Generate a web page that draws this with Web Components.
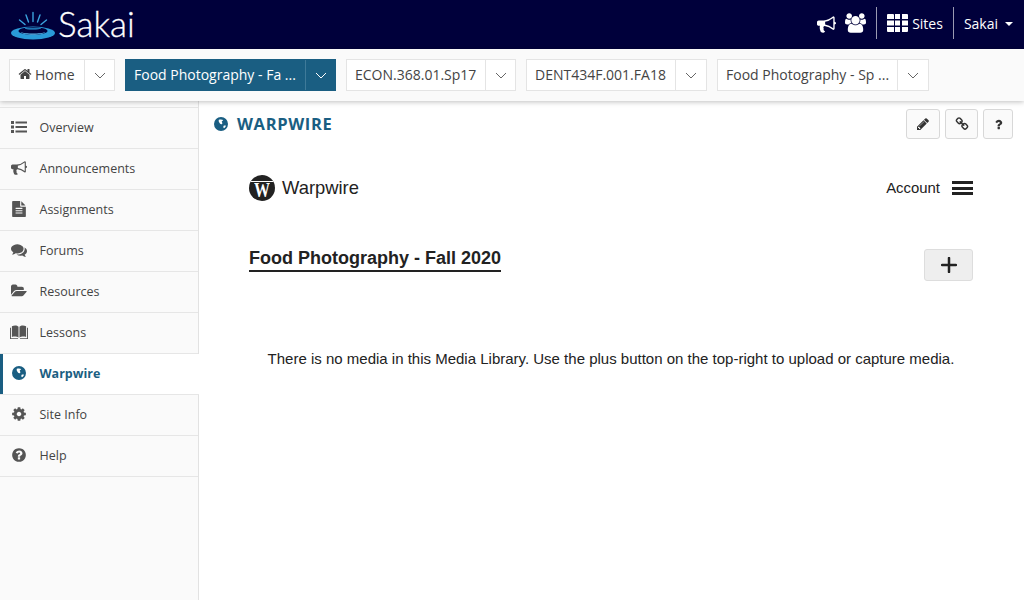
<!DOCTYPE html>
<html lang="en">
<head>
<meta charset="utf-8">
<title>Warpwire : Food Photography - Fall 2020 : Sakai</title>
<style>
  html, body { margin: 0; height: 100%; overflow: hidden; background: #fff; }
  body { font-family: "Open Sans", "Liberation Sans", sans-serif; color: #333; }
  sakai-shell { height: 600px; }
</style>
</head>
<body>

<sakai-shell>
  <sakai-header slot="header"></sakai-header>
  <site-tabs slot="tabs">
    <site-tab icon="home" style="--label-w:75px;--caret-w:29px">Home</site-tab>
    <site-tab active style="--label-w:180px;--caret-w:29px">Food Photography - Fa ...</site-tab>
    <site-tab style="--label-w:139px;--caret-w:29px">ECON.368.01.Sp17</site-tab>
    <site-tab style="--label-w:149px;--caret-w:30px">DENT434F.001.FA18</site-tab>
    <site-tab style="--label-w:180px;--caret-w:30px">Food Photography - Sp ...</site-tab>
  </site-tabs>
  <tool-menu slot="menu">
    <tool-item icon="list">Overview</tool-item>
    <tool-item icon="bullhorn">Announcements</tool-item>
    <tool-item icon="file">Assignments</tool-item>
    <tool-item icon="comments">Forums</tool-item>
    <tool-item icon="folder">Resources</tool-item>
    <tool-item icon="book" size="18">Lessons</tool-item>
    <tool-item icon="globe" size="14" active>Warpwire</tool-item>
    <tool-item icon="gear">Site Info</tool-item>
    <tool-item icon="help">Help</tool-item>
  </tool-menu>
  <tool-title slot="title">WARPWIRE</tool-title>
  <warpwire-panel slot="content" course="Food Photography - Fall 2020">
    There is no media in this Media Library. Use the plus button on the top-right to upload or capture media.
  </warpwire-panel>
</sakai-shell>

<script>
// font awesome 4 shapes, redrawn where noted
const ICONS = {
  home: ['0 0 1792 1792', 'M1472 992v480q0 26-19 45t-45 19h-384v-384h-256v384h-384q-26 0-45-19t-19-45v-480q0-1 .5-3t.5-3l575-474 575 474q1 2 1 6zm223-69l-62 74q-8 9-21 11h-3q-13 0-21-7l-692-577-692 577q-12 8-24 7-13-2-21-11l-62-74q-8-10-7-23.5t11-21.5l719-599q32-26 76-26t76 26l244 204v-195q0-14 9-23t23-9h192q14 0 23 9t9 23v408l219 182q10 8 11 21.5t-7 23.5z'],
  bullhorn: ['0 0 1792 1792', 'M1664 640q53 0 90.5 37.5t37.5 90.5-37.5 90.5-90.5 37.5v384q0 52-38 90t-90 38q-417-347-812-380-58 19-91 66t-31 100.5 40 92.5q-20 33-23 65.5t6 58 33.5 55 48 50 61.5 50.5q-29 58-111.5 83t-168.5 11.5-132-55.5q-7-23-29.5-87.5t-32-94.5-23-89-15-101 3.5-98.5 22-110.5h-122q-66 0-113-47t-47-113v-192q0-66 47-113t113-47h480q435 0 896-384 52 0 90 38t38 90v384zm-128 604v-954q-394 302-768 343v270q377 42 768 341z'],
  users: ['0 0 1920 1792', 'M593 896q-162 5-265 128h-134q-82 0-138-40.5t-56-118.5q0-353 124-353 6 0 43.5 21t97.5 42.5 119 21.5q67 0 133-23-5 37-5 66 0 139 81 256zm1071 637q0 120-73 189.5t-194 69.5h-874q-121 0-194-69.5t-73-189.5q0-53 3.5-103.5t14-109 26.5-108.5 43-97.5 62-81 85.5-53.5 111.5-20q10 0 43 21.5t73 48 107 48 135 21.5 135-21.5 107-48 73-48 43-21.5q61 0 111.5 20t85.5 53.5 62 81 43 97.5 26.5 108.5 14 109 3.5 103.5zm-1024-1277q0 106-75 181t-181 75-181-75-75-181 75-181 181-75 181 75 75 181zm704 384q0 159-112.5 271.5t-271.5 112.5-271.5-112.5-112.5-271.5 112.5-271.5 271.5-112.5 271.5 112.5 112.5 271.5zm576 225q0 78-56 118.5t-138 40.5h-134q-103-123-265-128 81-117 81-256 0-29-5-66 66 23 133 23 59 0 119-21.5t97.5-42.5 43.5-21q124 0 124 353zm-128-609q0 106-75 181t-181 75-181-75-75-181 75-181 181-75 181 75 75 181z'],
  th: ['0 0 21 18', 'M1 0h5a1 1 0 0 1 1 1v4H0V1a1 1 0 0 1 1-1zM8 0h5v5H8zM15 0h5a1 1 0 0 1 1 1v4h-6zM0 6.5h7v5H0zM8 6.5h5v5H8zM15 6.500h6v5h-6zM0 13h7v5H1a1 1 0 0 1-1-1zM8 13h5v5H8zM15 13h6v4a1 1 0 0 1-1 1h-5z'],
  pencil: ['0 0 1792 1792', 'M491 1536l91-91-235-235-91 91v107h128v128h107zm523-928q0-22-22-22-10 0-17 7l-542 542q-7 7-7 17 0 22 22 22 10 0 17-7l542-542q7-7 7-17zm-54-192l416 416-832 832h-416v-416zm683 96q0 53-37 90l-166 166-416-416 166-165q36-38 90-38 53 0 91 38l235 234q37 39 37 91z'],
  link: ['0 0 1792 1792', 'M1520 1216q0-40-28-68l-208-208q-28-28-68-28-42 0-72 32 3 3 19 18.500t21.500 21.500 15 19 13 25.500 3.500 27.500q0 40-28 68t-68 28q-15 0-27.500-3.500t-25.500-13-19-15-21.500-21.500-18.500-19q-33 31-33 73 0 40 28 68l206 207q27 27 68 27 40 0 68-26l147-146q28-28 28-67zm-703-705q0-40-28-68l-206-207q-28-28-68-28-39 0-68 27l-147 146q-28 28-28 67 0 40 28 68l208 208q27 27 68 27 42 0 72-31-3-3-19-18.500t-21.500-21.500-15-19-13-25.500-3.500-27.500q0-40 28-68t68-28q15 0 27.500 3.500t25.500 13 19 15 21.500 21.500 18.500 19q33-31 33-73zm895 705q0 120-85 203l-147 146q-83 83-203 83-121 0-204-85l-206-207q-83-83-83-203 0-123 88-209l-88-88q-86 88-208 88-120 0-204-84l-208-208q-84-84-84-204t85-203l147-146q83-83 203-83 121 0 204 85l206 207q83 83 83 203 0 123-88 209l88 88q86-88 208-88 120 0 204 84l208 208q84 84 84 204z'],
  question: ['0 0 1792 1792', 'M1088 1256v240q0 16-12 28t-28 12h-240q-16 0-28-12t-12-28v-240q0-16 12-28t28-12h240q16 0 28 12t12 28zm316-600q0 54-15.500 101t-35 76.500-55 59.500-57.500 43.500-61 35.500q-41 23-68.500 65t-27.500 67q0 17-12 32.500t-28 15.500h-240q-15 0-25.500-18.500t-10.500-37.500v-45q0-83 65-156.500t143-108.500q59-27 84-56t25-76q0-42-46.500-74t-107.500-32q-65 0-108 29-35 25-107 115-13 16-31 16-12 0-25-8l-164-125q-13-10-15.500-25t5.500-28q160-266 464-266 80 0 161 31t146 83 106 127.500 41 158.500z'],
  list: ['0 0 16 13', 'M0 .5h3v3H0zM0 5h3v3H0zM0 9.500h3v3H0zM4.500 1h11.500v2H4.500zM4.500 5.500h11.500v2H4.500zM4.500 10h11.500v2H4.500z'],
  file: ['0 0 1792 1792', 'M1596 476q14 14 28 36h-472v-472q22 14 36 28zm-476 164h544v1056q0 40-28 68t-68 28h-1344q-40 0-68-28t-28-68v-1600q0-40 28-68t68-28h800v544q0 40 28 68t68 28zm160 736v-64q0-14-9-23t-23-9h-704q-14 0-23 9t-9 23v64q0 14 9 23t23 9h704q14 0 23-9t9-23zm0-256v-64q0-14-9-23t-23-9h-704q-14 0-23 9t-9 23v64q0 14 9 23t23 9h704q14 0 23-9t9-23zm0-256v-64q0-14-9-23t-23-9h-704q-14 0-23 9t-9 23v64q0 14 9 23t23 9h704q14 0 23-9t9-23z'],
  comments: ['0 0 1792 1792', 'M1408 768q0 139-94 257t-256.500 186.500-353.500 68.500q-86 0-176-16-124 88-278 128-36 9-86 16h-3q-11 0-20.500-8t-11.500-21q-1-3-1-6.500t.5-6.500 2-6l2.500-5 3.500-5.500 4-5 4.500-5 4-4.500q5-6 23-25t26-29.500 22.500-29 25-38.500 20.500-44q-124-72-195-177t-71-224q0-139 94-257t256.500-186.500 353.500-68.500 353.500 68.500 256.500 186.500 94 257zm384 256q0 120-71 224.500t-195 176.500q10 24 20.500 44t25 38.500 22.500 29 26 29.500 23 25q1 1 4 4.500t4.500 5 4 5 3.500 5.500l2.500 5 2 6 .5 6.500-1 6.500q-3 14-13 22t-22 7q-50-7-86-16-154-40-278-128-90 16-176 16-271 0-472-132 58 4 88 4 161 0 309-45t264-129q125-92 192-212t67-254q0-77-23-152 129 71 204 178t75 230z'],
  folder: ['0 0 1920 1792', 'M1879 952q0 31-31 66l-336 396q-43 51-120.500 86.500t-143.500 35.500h-1088q-34 0-60.500-13t-26.500-43q0-31 31-66l336-396q43-51 120.500-86.500t143.500-35.500h1088q34 0 60.500 13t26.500 43zm-343-344v160h-832q-94 0-197 47.500t-164 119.500l-337 396-5 6q0-4-.5-12.500t-.5-12.500v-960q0-92 66-158t158-66h320q92 0 158 66t66 158v32h544q92 0 158 66t66 158z'],
  // open book, hand drawn
  book: ['0 0 19 15', 'M2 1.500C4.500.3 7.500.5 9 2v11.500C7.500 12.300 4.500 12 2 12.800zM10 2c1.500-1.500 4.500-1.700 7-.5v11.300c-2.500-.8-5.500-.5-7 .7zM1 3v11h7.500v.8H0V3zM18 3v11h-7.500v.8H19V3z'],
  gear: ['0 0 1792 1792', 'M1152 896q0-106-75-181t-181-75-181 75-75 181 75 181 181 75 181-75 75-181zm512-109v222q0 12-8 23t-20 13l-185 28q-19 54-39 91 35 50 107 138 10 12 10 25t-9 23q-27 37-99 108t-94 71q-12 0-26-9l-138-108q-44 23-91 38-16 136-29 186-7 28-36 28h-222q-14 0-24.500-8.500t-11.500-21.500l-28-184q-49-16-90-37l-141 107q-10 9-25 9-14 0-25-11-126-114-165-168-7-10-7-23 0-12 8-23 15-21 51-66.500t54-70.500q-27-50-41-99l-183-27q-13-2-21-12.500t-8-23.500v-222q0-12 8-23t19-13l186-28q14-46 39-92-40-57-107-138-10-12-10-24 0-10 9-23 26-36 98.500-107.500t94.500-71.500q13 0 26 10l138 107q44-23 91-38 16-136 29-186 7-28 36-28h222q14 0 24.500 8.500t11.500 21.500l28 184q49 16 90 37l142-107q9-9 24-9 13 0 25 10 129 119 165 170 7 8 7 22 0 12-8 23-15 21-51 66.500t-54 70.500q26 50 41 98l183 28q13 2 21 12.500t8 23.500z'],
  help: ['0 0 1792 1792', 'M1024 1376v-192q0-14-9-23t-23-9h-192q-14 0-23 9t-9 23v192q0 14 9 23t23 9h192q14 0 23-9t9-23zm256-672q0-88-55.500-163t-138.500-116-170-41q-243 0-371 213-15 24 8 42l132 100q7 6 19 6 16 0 25-12 53-68 86-92 34-24 86-24 48 0 85.500 26t37.500 59q0 38-20 61t-68 45q-63 28-115.500 86.500t-52.500 125.500v36q0 14 9 23t23 9h192q14 0 23-9t9-23q0-19 21.500-49.500t54.500-49.500q32-18 49-28.500t46-35 44.500-48 28-60.500 12.500-81zm384 192q0 209-103 385.500t-279.500 279.500-385.500 103-385.500-103-279.500-279.500-103-385.500 103-385.500 279.500-279.500 385.500-103 385.500 103 279.500 279.500 103 385.500z'],
  // globe with the land cut out, hand drawn
  globe: ['0 0 16 16', 'M8 0a8 8 0 1 1 0 16A8 8 0 0 1 8 0zM5.500 3.200c1.500-.7 3.800-.6 5 .2-.3 1.100-1.400 1.100-1.700 2.100.5 1 1.200 1.600.4 2.500-1.100.5-2 0-2.600-.9C6 6.100 4.900 5.300 5.500 3.200zM11 10c1.100-.4 2.200-.6 2.600 0-.2 1.100-1.100 2.200-2.200 2.800-.9-.6-.9-1.900-.4-2.800z', 'evenodd']
};

class FaIcon extends HTMLElement {
  connectedCallback() {
    const [box, d, rule] = ICONS[this.getAttribute('name')];
    this.attachShadow({ mode: 'open' }).innerHTML = `
      <style>
        :host { display: inline-flex; flex: none; }
        svg { display: block; width: 100%; height: 100%; fill: currentColor; }
      </style>
      <svg viewBox="${box}"><path d="${d}" fill-rule="${rule || 'nonzero'}"/></svg>`;
  }
}
customElements.define('fa-icon', FaIcon);

class SakaiShell extends HTMLElement {
  connectedCallback() {
    this.attachShadow({ mode: 'open' }).innerHTML = `
      <style>
        :host { display: grid; grid-template-columns: 199px 1fr; grid-template-rows: 49px 52px 1fr; }
        .head, .tabs { grid-column: 1 / -1; }
        .tabs { position: relative; z-index: 2; box-shadow: 0 1px 5px rgba(0,0,0,.25); }
        .side { background: #fafafa; border-right: 1px solid #e2e2e2; padding-top: 6px; box-sizing: border-box; }
        .main { display: flex; flex-direction: column; min-width: 0; }
      </style>
      <div class="head"><slot name="header"></slot></div>
      <div class="tabs"><slot name="tabs"></slot></div>
      <div class="side"><slot name="menu"></slot></div>
      <div class="main"><slot name="title"></slot><slot name="content"></slot></div>`;
  }
}
customElements.define('sakai-shell', SakaiShell);

class SakaiHeader extends HTMLElement {
  connectedCallback() {
    this.attachShadow({ mode: 'open' }).innerHTML = `
      <style>
        :host { display: flex; height: 49px; align-items: center; background: #00003b; color: #fff; font-size: 14px; }
        .logo { display: flex; align-items: center; margin-left: 10px; }
        .logo svg { width: 47px; height: 30px; display: block; margin-top: 1px; }
        .word { font: 300 35px/45px Lato, "Open Sans", sans-serif; margin: -3px 0 0 1px; -webkit-text-stroke: .3px #fff; }
        .right { margin-left: auto; display: flex; align-items: center; height: 36px; margin-top: -3px; }
        .sep { width: 1px; height: 32px; background: #9a9ab2; }
        .sites { display: flex; align-items: center; gap: 4px; padding: 0 10px; }
        .user { display: flex; align-items: center; padding: 0 11px 0 10px; gap: 7px; }
        .caret { width: 0; height: 0; border: 4.500px solid transparent; border-top-color: #fff; border-bottom: 0; margin-top: 2px; }
      </style>
      <div class="logo">
        <svg viewBox="0 0 47 30" aria-hidden="true">
          <ellipse cx="23" cy="23" rx="22" ry="6.500" fill="#2a9ad8"/>
          <ellipse cx="23" cy="21" rx="14.500" ry="3.800" fill="#00003b"/>
          <path d="M11 22c3 2 21 2 24 0-2 3.600-22 3.600-24 0z" fill="#5cb7ea"/>
          <path d="M15.500 18c0 1.300 15 1.300 15 0" fill="none" stroke="#2a9ad8" stroke-width="1.200"/>
          <path d="M23 11.500V2.500M18.500 12L16 5M27.500 12L30 5M15 14.500L9.500 10M31 14.500L36.500 10" fill="none" stroke="#3aa3de" stroke-width="1.400" stroke-linecap="round"/>
        </svg>
        <span class="word">Sakai</span>
      </div>
      <div class="right">
        <fa-icon name="bullhorn" style="width:19px;height:19px;margin:2px 9px 0 0"></fa-icon>
        <fa-icon name="users" style="width:21px;height:20px;margin-right:10px"></fa-icon>
        <div class="sep"></div>
        <div class="sites"><fa-icon name="th" style="width:21px;height:18px"></fa-icon><span>Sites</span></div>
        <div class="sep"></div>
        <div class="user"><span>Sakai</span><i class="caret"></i></div>
      </div>`;
  }
}
customElements.define('sakai-header', SakaiHeader);

class SiteTabs extends HTMLElement {
  connectedCallback() {
    this.attachShadow({ mode: 'open' }).innerHTML = `
      <style>
        :host { display: flex; height: 52px; box-sizing: border-box; padding: 10px 9px; gap: 10px; background: #fafafa; }
      </style>
      <slot></slot>`;
  }
}
customElements.define('site-tabs', SiteTabs);

class SiteTab extends HTMLElement {
  connectedCallback() {
    const icon = this.getAttribute('icon');
    this.attachShadow({ mode: 'open' }).innerHTML = `
      <style>
        :host { display: flex; height: 32px; box-sizing: border-box; border: 1px solid #e4e4e4; background: #fff; color: #444; font-size: 14px; }
        :host([active]) { background: #1a5e82; border-color: #1a5e82; color: #fff; }
        .label { width: var(--label-w); box-sizing: border-box; padding: 0 0 2px 8px; display: flex; align-items: center; gap: 3px; white-space: nowrap; overflow: hidden; border-right: 1px solid #e4e4e4; }
        :host([active]) .label { border-right-color: #3f7a99; }
        .caret { width: var(--caret-w); display: flex; align-items: center; justify-content: center; color: #666; }
        :host([active]) .caret { color: #fff; }
        svg { width: 12px; height: 7px; fill: none; stroke: currentColor; stroke-width: 1; }
      </style>
      <div class="label">${icon ? `<fa-icon name="${icon}" style="width:14px;height:14px"></fa-icon>` : ''}<slot></slot></div>
      <div class="caret"><svg viewBox="0 0 12 7"><path d="M1 1l5 5 5-5"/></svg></div>`;
  }
}
customElements.define('site-tab', SiteTab);

class ToolMenu extends HTMLElement {
  connectedCallback() {
    this.attachShadow({ mode: 'open' }).innerHTML = `
      <style>:host { display: block; border-top: 1px solid #e6e6e6; }</style>
      <slot></slot>`;
  }
}
customElements.define('tool-menu', ToolMenu);

class ToolItem extends HTMLElement {
  connectedCallback() {
    const size = this.getAttribute('size') || 16;
    this.attachShadow({ mode: 'open' }).innerHTML = `
      <style>
        :host { display: flex; align-items: center; height: 41px; box-sizing: border-box; border-bottom: 1px solid #e6e6e6; padding: 0 0 2px 11px; font-size: 12.500px; color: #444; }
        :host([active]) { background: #fff; color: #1a5e82; font-weight: 700; box-shadow: inset 3px 0 0 #1a5e82; margin-right: -1px; }
        .ic { width: 16px; display: flex; justify-content: center; margin-right: 12.500px; color: #555; }
        :host([active]) .ic { color: #1a5e82; }
      </style>
      <span class="ic"><fa-icon name="${this.getAttribute('icon')}" style="width:${size}px;height:${size}px"></fa-icon></span>
      <slot></slot>`;
  }
}
customElements.define('tool-item', ToolItem);

class ToolTitle extends HTMLElement {
  connectedCallback() {
    this.attachShadow({ mode: 'open' }).innerHTML = `
      <style>
        :host { display: flex; align-items: flex-start; padding: 8px 11px 0 15px; height: 40px; box-sizing: border-box; color: #1a5e82; }
        h1 { margin: 0; font-size: 16.500px; line-height: 30px; font-weight: 700; letter-spacing: .65px; display: flex; align-items: center; gap: 9px; height: 30px; }
        .btns { margin-left: auto; display: flex; gap: 5px; color: #333; }
        .btn { height: 30px; box-sizing: border-box; border: 1px solid #d8d8d8; border-radius: 3px; background: #fafafa; display: flex; align-items: center; justify-content: center; }
      </style>
      <h1><fa-icon name="globe" style="width:14px;height:14px"></fa-icon><slot></slot></h1>
      <div class="btns">
        <div class="btn" style="width:34px"><fa-icon name="pencil" style="width:14px;height:14px"></fa-icon></div>
        <div class="btn" style="width:33px"><fa-icon name="link" style="width:14px;height:14px"></fa-icon></div>
        <div class="btn" style="width:30px"><fa-icon name="question" style="width:13px;height:13px"></fa-icon></div>
      </div>`;
  }
}
customElements.define('tool-title', ToolTitle);

class WarpwirePanel extends HTMLElement {
  connectedCallback() {
    this.attachShadow({ mode: 'open' }).innerHTML = `
      <style>
        :host { display: block; padding: 33px 51px 0 50px; font-family: "Liberation Sans", Arial, sans-serif; color: #222; }
        .top { display: flex; align-items: center; height: 28px; }
        .brand { display: flex; align-items: center; gap: 7px; font-size: 18.400px; }
        .mark { position: relative; width: 26px; height: 26px; border-radius: 50%; background: #222; color: #fff; display: flex; align-items: center; justify-content: center; overflow: hidden; padding-top: 5px; box-sizing: border-box; }
        .mark::before { content: ""; position: absolute; left: 0; right: 0; top: 6px; height: 1px; background: #fff; }
        .mark b { font: 700 16px/1 "Liberation Serif", serif; transform: scaleY(1.250); }
        .account { margin-left: auto; display: flex; align-items: center; gap: 12px; font-size: 14.900px; }
        .burger { width: 21px; height: 14px; box-sizing: border-box; border-top: 3px solid #222; border-bottom: 3px solid #222; position: relative; }
        .burger::after { content: ""; position: absolute; left: 0; right: 0; top: 2.500px; height: 3px; background: #222; }
        .course { display: flex; justify-content: space-between; align-items: flex-start; margin-top: 44px; }
        h2 { margin: 0; font-size: 18px; line-height: 24px; font-weight: 700; border-bottom: 2px solid #222; padding-bottom: 0; }
        .plus { margin-top: 3px; width: 49px; height: 32px; box-sizing: border-box; border: 1px solid #ddd; border-radius: 3px; background: #eee; display: flex; align-items: center; justify-content: center; }
        .plus svg { width: 16px; height: 16px; display: block; }
        p { margin: 68px 0 0; text-align: center; font-size: 15px; line-height: 20px; }
      </style>
      <div class="top">
        <div class="brand"><span class="mark"><b>W</b></span><span>Warpwire</span></div>
        <div class="account"><span>Account</span><span class="burger"></span></div>
      </div>
      <div class="course">
        <h2>${this.getAttribute('course')}</h2>
        <div class="plus"><svg viewBox="0 0 16 16"><path d="M8 1v14M1 8h14" stroke="#222" stroke-width="2.500" stroke-linecap="round"/></svg></div>
      </div>
      <p><slot></slot></p>`;
  }
}
customElements.define('warpwire-panel', WarpwirePanel);
</script>
</body>
</html>
